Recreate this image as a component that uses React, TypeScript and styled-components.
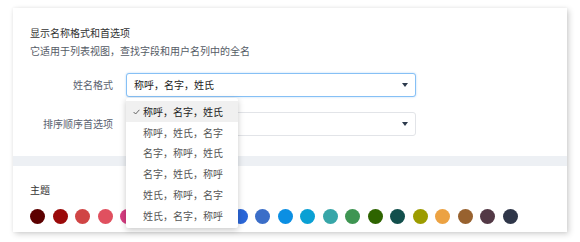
import React from 'react';
import styled, {createGlobalStyle} from 'styled-components';

const GlobalStyle = createGlobalStyle`
  body {
    margin: 0;
    background: #fff;
    font-family: "Noto Sans CJK SC", "Noto Sans", sans-serif;
  }
`

const Page = styled.div`
  padding: 8px 13px 10px 13px;
`

const Card = styled.div`
  background: #fff;
  box-shadow: 2px 2px 6px rgba(0, 0, 0, 0.18), 0 0 3px rgba(0, 0, 0, 0.06);
`

const Section = styled.div<{top: number; bottom: number}>`
  padding: ${(p) => p.top}px 17px ${(p) => p.bottom}px 17px;
`

const Band = styled.div`
  height: 10px;
  background: #edf0f4;
`

const Title = styled.div`
  font-size: 10px;
  line-height: 18px;
  color: #333;
`

const Hint = styled.div`
  font-size: 10px;
  line-height: 18px;
  color: #555b66;
`

const Form = styled.div`
  display: flex;
  flex-direction: column;
  gap: 15px;
  margin-top: 12.5px;
`

const Row = styled.div`
  display: flex;
  align-items: center;
  gap: 13px;
`

const Label = styled.div`
  width: 83px;
  text-align: right;
  font-size: 10px;
  color: #5b6270;
`

const SelectWrap = styled.div`
  position: relative;
`

const SelectBox = styled.div<{focused?: boolean}>`
  box-sizing: border-box;
  width: 290px;
  height: 24px;
  display: flex;
  align-items: center;
  justify-content: space-between;
  padding: 0 7px 0 7px;
  border: 1px solid ${(p) => (p.focused ? '#86c0f5' : '#e2e4e8')};
  border-radius: 3px;
  box-shadow: ${(p) => (p.focused ? '0 0 2px rgba(80, 160, 240, 0.45)' : 'none')};
  font-size: 10px;
  color: #222;
  background: #fff;
`

const Arrow = styled.span`
  width: 0;
  height: 0;
  border-left: 3px solid transparent;
  border-right: 3px solid transparent;
  border-top: 4px solid #2c3a4c;
  margin-right: 0px;
`

const Menu = styled.div`
  position: absolute;
  top: calc(100% + 1px);
  left: 0;
  width: 112px;
  padding: 3.5px 0 2px 0;
  background: #fff;
  border-radius: 2px;
  box-shadow: 0 2px 6px rgba(0, 0, 0, 0.22);
  z-index: 10;
`

const Item = styled.div<{active?: boolean}>`
  position: relative;
  height: 20.8px;
  display: flex;
  align-items: center;
  padding-left: 17px;
  font-size: 10px;
  color: ${(p) => (p.active ? '#222' : '#555')};
  background: ${(p) => (p.active ? '#f0f0f0' : 'transparent')};
`

const Check = styled.svg`
  position: absolute;
  left: 7px;
  top: 8px;
`

const Swatches = styled.div`
  display: flex;
  gap: 7.5px;
  margin-top: 10.5px;
`

const Dot = styled.span<{color: string}>`
  width: 15px;
  height: 15px;
  border-radius: 50%;
  background: ${(p) => p.color};
`

const options = [
  '称呼，名字，姓氏',
  '称呼，姓氏，名字',
  '名字，称呼，姓氏',
  '名字，姓氏，称呼',
  '姓氏，称呼，名字',
  '姓氏，名字，称呼',
];

const colors = [
  '#5c0000', '#9b0a0a', '#d04545', '#e0505f', '#d63c80', '#b0408f',
  '#8a3fa8', '#6b46b8', '#4c52c4', '#2a66d8', '#3b6ec8', '#0b8fe3',
  '#0aa0d4', '#37a6a8', '#3e9552', '#2e6400', '#124f4c', '#9c9c00',
  '#eca242', '#98622f', '#533946', '#2f3649',
];

const App = () => {
  return (
    <Page>
      <GlobalStyle />
      <Card>
        <Section top={16} bottom={20}>
          <Title>显示名称格式和首选项</Title>
          <Hint>它适用于列表视图，查找字段和用户名列中的全名</Hint>
          <Form>
            <Row>
              <Label>姓名格式</Label>
              <SelectWrap>
                <SelectBox focused>
                  <span>称呼，名字，姓氏</span>
                  <Arrow />
                </SelectBox>
                <Menu>
                  {options.map((o, i) => (
                    <Item key={o} active={i === 0}>
                      {i === 0 && (
                        <Check width="7" height="6" viewBox="0 0 7 6">
                          <path d="M0.6 3 L2.6 5 L6.4 0.8" fill="none" stroke="#555" strokeWidth="0.9" />
                        </Check>
                      )}
                      {o}
                    </Item>
                  ))}
                </Menu>
              </SelectWrap>
            </Row>
            <Row>
              <Label>排序顺序首选项</Label>
              <SelectWrap>
                <SelectBox>
                  <span></span>
                  <Arrow />
                </SelectBox>
              </SelectWrap>
            </Row>
          </Form>
        </Section>
        <Band />
        <Section top={15} bottom={7.5}>
          <Title>主题</Title>
          <Swatches>
            {colors.map((c) => (
              <Dot key={c} color={c} />
            ))}
          </Swatches>
        </Section>
      </Card>
    </Page>
  );
};

export default App;
